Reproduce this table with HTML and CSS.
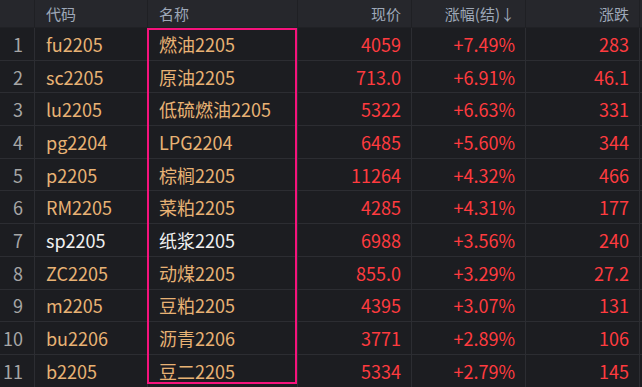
FILE: index.html
```html
<!DOCTYPE html>
<html lang="zh">
<head>
<meta charset="utf-8">
<link rel="stylesheet" href="styles.css">
</head>
<body>
<div class="board">
  <div class="grid">
    <div class="row head">
      <div class="c idx"></div>
      <div class="c l">代码</div>
      <div class="c l">名称</div>
      <div class="c r">现价</div>
      <div class="c r">涨幅(结)↓</div>
      <div class="c r">涨跌</div>
      <div class="c end"></div>
    </div>
    <div class="row"><div class="c idx">1</div><div class="c l code">fu2205</div><div class="c l code">燃油2205</div><div class="c r up">4059</div><div class="c r up">+7.49%</div><div class="c r up">283</div><div class="c end"></div></div>
    <div class="row"><div class="c idx">2</div><div class="c l code">sc2205</div><div class="c l code">原油2205</div><div class="c r up">713.0</div><div class="c r up">+6.91%</div><div class="c r up">46.1</div><div class="c end"></div></div>
    <div class="row"><div class="c idx">3</div><div class="c l code">lu2205</div><div class="c l code">低硫燃油2205</div><div class="c r up">5322</div><div class="c r up">+6.63%</div><div class="c r up">331</div><div class="c end"></div></div>
    <div class="row"><div class="c idx">4</div><div class="c l code">pg2204</div><div class="c l code">LPG2204</div><div class="c r up">6485</div><div class="c r up">+5.60%</div><div class="c r up">344</div><div class="c end"></div></div>
    <div class="row"><div class="c idx">5</div><div class="c l code">p2205</div><div class="c l code">棕榈2205</div><div class="c r up">11264</div><div class="c r up">+4.32%</div><div class="c r up">466</div><div class="c end"></div></div>
    <div class="row"><div class="c idx">6</div><div class="c l code">RM2205</div><div class="c l code">菜粕2205</div><div class="c r up">4285</div><div class="c r up">+4.31%</div><div class="c r up">177</div><div class="c end"></div></div>
    <div class="row"><div class="c idx">7</div><div class="c l plain">sp2205</div><div class="c l plain">纸浆2205</div><div class="c r up">6988</div><div class="c r up">+3.56%</div><div class="c r up">240</div><div class="c end"></div></div>
    <div class="row"><div class="c idx">8</div><div class="c l code">ZC2205</div><div class="c l code">动煤2205</div><div class="c r up">855.0</div><div class="c r up">+3.29%</div><div class="c r up">27.2</div><div class="c end"></div></div>
    <div class="row"><div class="c idx">9</div><div class="c l code">m2205</div><div class="c l code">豆粕2205</div><div class="c r up">4395</div><div class="c r up">+3.07%</div><div class="c r up">131</div><div class="c end"></div></div>
    <div class="row"><div class="c idx">10</div><div class="c l code">bu2206</div><div class="c l code">沥青2206</div><div class="c r up">3771</div><div class="c r up">+2.89%</div><div class="c r up">106</div><div class="c end"></div></div>
    <div class="row"><div class="c idx">11</div><div class="c l code">b2205</div><div class="c l code">豆二2205</div><div class="c r up">5334</div><div class="c r up">+2.79%</div><div class="c r up">145</div><div class="c end"></div></div>
  </div>
  <div class="highlight"></div>
</div>
</body>
</html>
```
FILE: styles.css
```css
html, body {
  margin: 0;
  padding: 0;
  background: #1c1d21;
}
body {
  width: 642px;
  height: 387px;
  overflow: hidden;
  font-family: "Noto Sans CJK SC", "Noto Sans", sans-serif;
}
.board {
  position: relative;
  width: 642px;
  height: 387px;
}
.grid {
  display: flex;
  flex-direction: column;
}
.row {
  display: grid;
  grid-template-columns: 35px 113px 150px 114px 114px 114px 2px;
  height: 32.7px;
  box-sizing: border-box;
  border-bottom: 1px solid #2c2d32;
  font-size: 18px;
}
.row.head {
  height: 28px;
  background: #26272c;
  font-size: 15px;
  color: #9ea8b8;
  border-bottom: 1px solid #202125;
}
.c {
  box-sizing: border-box;
  border-right: 1px solid #2c2d32;
  display: flex;
  align-items: center;
  white-space: nowrap;
  line-height: 1;
}
.head .c {
  border-right-color: #1f2024;
}
.c.end {
  border-right: none;
}
.c.l {
  justify-content: flex-start;
  padding-left: 11px;
}
.c.r {
  justify-content: flex-end;
  padding-right: 10px;
}
.c.idx {
  justify-content: flex-end;
  padding-right: 11px;
  color: #a6a6a6;
}
.code {
  color: #e8b274;
}
.plain {
  color: #f0f0f0;
}
.up {
  color: #ff3b3f;
}
.highlight {
  position: absolute;
  left: 147px;
  top: 28px;
  width: 150px;
  height: 356px;
  box-sizing: border-box;
  border: 2px solid #f5137c;
  pointer-events: none;
}
```
